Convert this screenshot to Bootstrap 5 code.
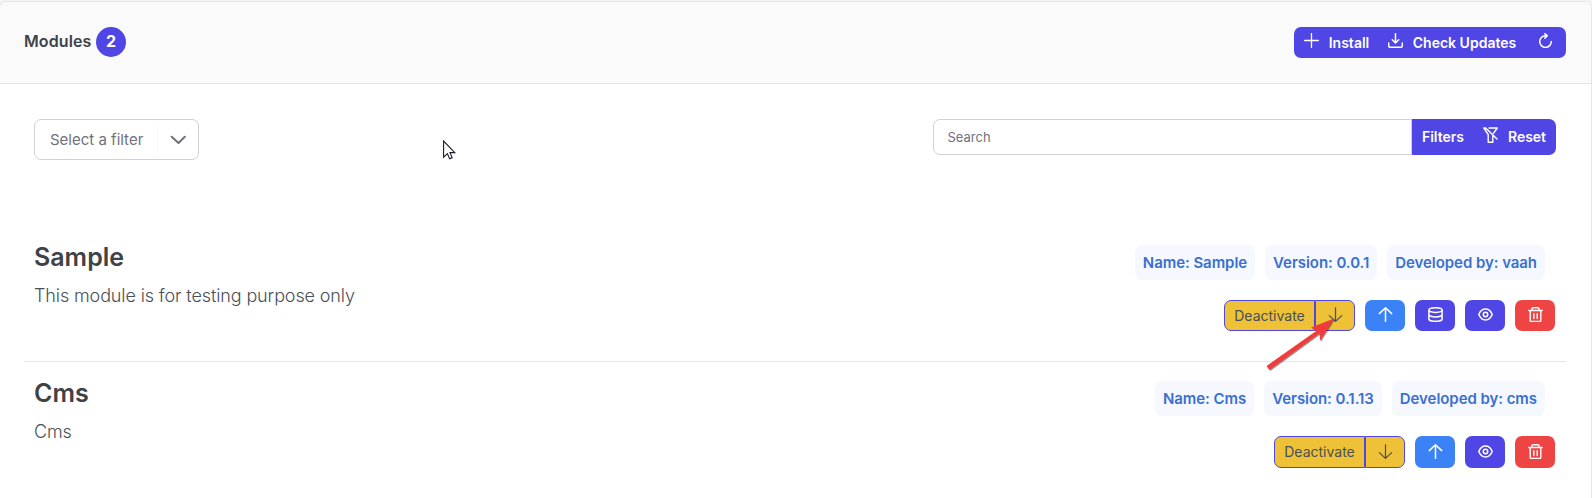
<!DOCTYPE html>
<html lang="en">
<head>
<meta charset="utf-8">
<meta name="viewport" content="width=device-width, initial-scale=1">
<title>Modules</title>
<link href="https://cdn.jsdelivr.net/npm/bootstrap@5.3.0/dist/css/bootstrap.min.css" rel="stylesheet">
<style>
body{font-family:Inter,"Liberation Sans",sans-serif;background:#f4f4f4;color:#495057;height:498px;overflow:hidden;line-height:1.2}
.panel{margin:1px 0 0 -1px;height:520px;border:1px solid #e5e5e5;border-radius:7px;background:#fff;overflow:hidden}
.panel-head{height:82px;padding:25px 25px 0 24px;background:#fafafa;border-bottom:1px solid #e5e5e5}
.panel-title{width:67px;font-size:16px;font-weight:600;letter-spacing:.1px;color:#3f4247}
.count{width:30px;height:30px;margin-left:5px;border-radius:50%;background:#4f46e5;color:#fff;font-weight:700;font-size:16px}
.btn{--bs-btn-padding-y:0;--bs-btn-padding-x:0;--bs-btn-font-size:14px;--bs-btn-font-weight:600;--bs-btn-border-radius:7px;--bs-btn-line-height:1;height:31px;display:flex;align-items:center;justify-content:center;border:0}
.btn svg,.pick svg{flex:none}
.btn-indigo{--bs-btn-bg:#4f46e5;--bs-btn-color:#fff;--bs-btn-hover-bg:#4338ca;--bs-btn-hover-color:#fff}
.btn-sky{--bs-btn-bg:#3b82f6;--bs-btn-color:#fff;--bs-btn-hover-bg:#2563eb;--bs-btn-hover-color:#fff}
.btn-rose{--bs-btn-bg:#ef4444;--bs-btn-color:#fff;--bs-btn-hover-bg:#dc2626;--bs-btn-hover-color:#fff}
.btn-amber{--bs-btn-bg:#eec137;--bs-btn-color:#495057;--bs-btn-hover-bg:#eec137;--bs-btn-font-weight:400;border:1px solid #4f46e5}
.btn-group>.btn,.input-group>.btn{margin-left:0!important}
.w-install{width:84px;gap:10px;padding-left:1px}.w-check{width:148px;gap:10px}.w-sq{width:40px}
.w-reload{padding-right:2px}
.w-filters{width:61px;padding-left:1px}.w-reset{width:83px;gap:10px}.w-deact{width:91px}
.tools{padding:35px 35px 0 34px;height:116px}
.pick{width:165px;height:41px;border:1px solid #d1d1d4;border-radius:7px;font-size:15px;color:#71717a}
.pick span{width:123px;height:39px;padding-left:15px;border-right:1px solid #f8f8f8;border-radius:6px}
.search-box{width:623px;height:36px}
.search-box .form-control{height:36px;border:1px solid #d1d1d4;border-radius:7px;font-size:13px;padding:0 13.5px}
.search-box .form-control::placeholder{color:#71717a}
.search-box .btn{height:36px}
.module{height:137px;margin:0 25px 0 24px;padding:21px 11px 0 10px}
.module+.module{border-top:1px solid #e5e5e5;padding-top:19px}
#sample{margin-top:24px}
.module-name{font-size:25px;font-weight:600;line-height:24px;margin:0;color:#3f4247}
.module-text{font-size:18px;font-weight:300;line-height:22px;margin:16px 0 0;letter-spacing:-.12px;color:#495057}
.chip{height:35px;padding:0 8px;border-radius:7px;background:#f5f9ff;color:#3b6fd0;font-weight:600;font-size:15px;letter-spacing:-.06px}
.chips{gap:10px;margin-right:10px}
.acts{gap:10px;margin-top:20px}
.acts svg{margin-bottom:2px}
#cms .btn{height:32px}
.over{position:absolute;pointer-events:none}
.pointer{left:443px;top:140px}
.callout{left:1260px;top:312px;filter:drop-shadow(1px 1px .5px #0006)}
</style>
</head>
<body>
<svg class="d-none">
<g id="i-down" fill="none" stroke="currentColor" stroke-width="1.25" stroke-linecap="round" stroke-linejoin="round"><path d="M7.500.8v13.400M1.300 8.600l6.200 5.800 6.200-5.800"/></g>
<g id="i-up" fill="none" stroke="currentColor" stroke-width="1.5" stroke-linecap="round" stroke-linejoin="round"><path d="M7.500 14.400V.8M1.300 6.600l6.200-5.800 6.200 5.800"/></g>
<g id="i-eye" fill="none" stroke="currentColor" stroke-width="1.5"><path d="M.8 7.500C2.200 4 4.700 2 7.500 2s5.300 2 6.700 5.500C12.800 11 10.300 13 7.500 13S2.200 11 .8 7.500z" stroke-linejoin="round"/><circle cx="7.500" cy="7.500" r="2.200"/></g>
<g id="i-trash" fill="none" stroke="currentColor" stroke-width="1.4" stroke-linecap="round" stroke-linejoin="round"><path d="M.8 3.500h13.400M2.200 3.500v9.900q0 1 1 1h8.600q1 0 1-1V3.500M4 3.300V1.600q0-.9.900-.9h5.200q.9 0 .9.900v1.700M5.800 6.800v4.700M9.200 6.800v4.700"/></g>
<g id="i-db" fill="none" stroke="currentColor" stroke-width="1.5"><ellipse cx="7.500" cy="3.100" rx="6.600" ry="2.300"/><path d="M.9 3.100v8.800c0 1.300 3 2.400 6.600 2.400s6.600-1.100 6.600-2.400V3.100M.9 7.500c0 1.300 3 2.400 6.600 2.400s6.600-1.100 6.600-2.400"/></g>
</svg>

<main class="panel">
  <header class="panel-head d-flex justify-content-between align-items-start">
    <div class="d-flex align-items-center">
      <span class="panel-title">Modules</span>
      <span class="count d-flex align-items-center justify-content-center">2</span>
    </div>
    <div class="btn-group">
      <button class="btn btn-indigo w-install"><svg width="15" height="15" viewBox="0 0 15 15" class="mb-1" fill="none" stroke="currentColor" stroke-width="1.3" stroke-linecap="round"><path d="M7.500.6v13.800M.6 7.500h13.800"/></svg><span>Install</span></button>
      <button class="btn btn-indigo w-check"><svg width="15" height="15" viewBox="0 0 15 15" class="mb-1" fill="none" stroke="currentColor" stroke-width="1.5" stroke-linecap="round" stroke-linejoin="round"><path d="M7.500.7v9M4.300 6.700l3.200 3.200 3.200-3.200M.7 9.900v2.800q0 1.600 1.600 1.600h10.400q1.600 0 1.600-1.600V9.900"/></svg><span>Check Updates</span></button>
      <button class="btn btn-indigo w-sq w-reload"><svg width="15" height="15" viewBox="0 0 15 15" class="mb-1" fill="none" stroke="currentColor" stroke-width="1.5" stroke-linecap="round" stroke-linejoin="round"><path d="M7 2.800h2.300M6.800.6l2.500 2.200-2.500 2.300M7 2.800a5.800 5.800 0 1 0 6.300 5.800"/></svg></button>
    </div>
  </header>

  <section class="tools d-flex justify-content-between align-items-start">
    <div class="pick d-flex align-items-center">
      <span class="d-flex align-items-center">Select a filter</span>
      <svg class="mx-auto" width="16" height="10" viewBox="0 0 16 10" fill="none" stroke="#71717a" stroke-width="2" stroke-linecap="round" stroke-linejoin="round"><path d="M1.700 1.700L8.500 8l6.300-6.300"/></svg>
    </div>
    <div class="input-group search-box flex-nowrap">
      <input class="form-control" placeholder="Search" aria-label="Search">
      <button class="btn btn-indigo w-filters">Filters</button>
      <button class="btn btn-indigo w-reset"><svg width="15" height="16" viewBox="0 0 15 16" class="mb-1" fill="none" stroke="currentColor" stroke-width="1.4" stroke-linecap="round" stroke-linejoin="round"><path d="M2.700 1L14 12M6 1h8.300L10.400 6.300M2.700 1H.8l4.400 6.500v7.700h4.600V8"/></svg><span>Reset</span></button>
    </div>
  </section>

  <section>
    <article class="module d-flex justify-content-between" id="sample">
      <div><h2 class="module-name">Sample</h2><p class="module-text">This module is for testing purpose only</p></div>
      <div>
        <div class="chips d-flex justify-content-end">
          <span class="chip d-flex align-items-center">Name: Sample</span><span class="chip d-flex align-items-center">Version: 0.0.1</span><span class="chip d-flex align-items-center">Developed by: vaah</span>
        </div>
        <div class="acts d-flex justify-content-end">
          <div class="btn-group"><button class="btn btn-amber w-deact">Deactivate</button><button class="btn btn-amber w-sq"><svg width="15" height="15"><use href="#i-down"/></svg></button></div>
          <button class="btn btn-sky w-sq"><svg width="15" height="15"><use href="#i-up"/></svg></button>
          <button class="btn btn-indigo w-sq"><svg width="15" height="15"><use href="#i-db"/></svg></button>
          <button class="btn btn-indigo w-sq"><svg width="15" height="15"><use href="#i-eye"/></svg></button>
          <button class="btn btn-rose w-sq"><svg width="15" height="15"><use href="#i-trash"/></svg></button>
        </div>
      </div>
    </article>
    <article class="module d-flex justify-content-between" id="cms">
      <div><h2 class="module-name">Cms</h2><p class="module-text">Cms</p></div>
      <div>
        <div class="chips d-flex justify-content-end">
          <span class="chip d-flex align-items-center">Name: Cms</span><span class="chip d-flex align-items-center">Version: 0.1.13</span><span class="chip d-flex align-items-center">Developed by: cms</span>
        </div>
        <div class="acts d-flex justify-content-end">
          <div class="btn-group"><button class="btn btn-amber w-deact">Deactivate</button><button class="btn btn-amber w-sq"><svg width="15" height="15"><use href="#i-down"/></svg></button></div>
          <button class="btn btn-sky w-sq"><svg width="15" height="15"><use href="#i-up"/></svg></button>
          <button class="btn btn-indigo w-sq"><svg width="15" height="15"><use href="#i-eye"/></svg></button>
          <button class="btn btn-rose w-sq"><svg width="15" height="15"><use href="#i-trash"/></svg></button>
        </div>
      </div>
    </article>
  </section>
</main>

<!-- mouse pointer -->
<svg class="over pointer" width="14" height="21" viewBox="0 0 14 21"><path d="M.6 1v16.200l3.800-3.600 2.200 5.100 2.600-1.100-2.200-5h4.800z" fill="#fff" stroke="#1b1b2b" stroke-width="1.1"/></svg>
<!-- callout arrow -->
<svg class="over callout" width="80" height="62" viewBox="0 0 80 62"><path d="M74 6.500L51 15.500l5.500 3.200L6.500 54l3 4 50-36.500L60 29z" fill="#f23c3c"/></svg>
<script src="https://cdn.jsdelivr.net/npm/bootstrap@5.3.0/dist/js/bootstrap.bundle.min.js"></script>
</body>
</html>
